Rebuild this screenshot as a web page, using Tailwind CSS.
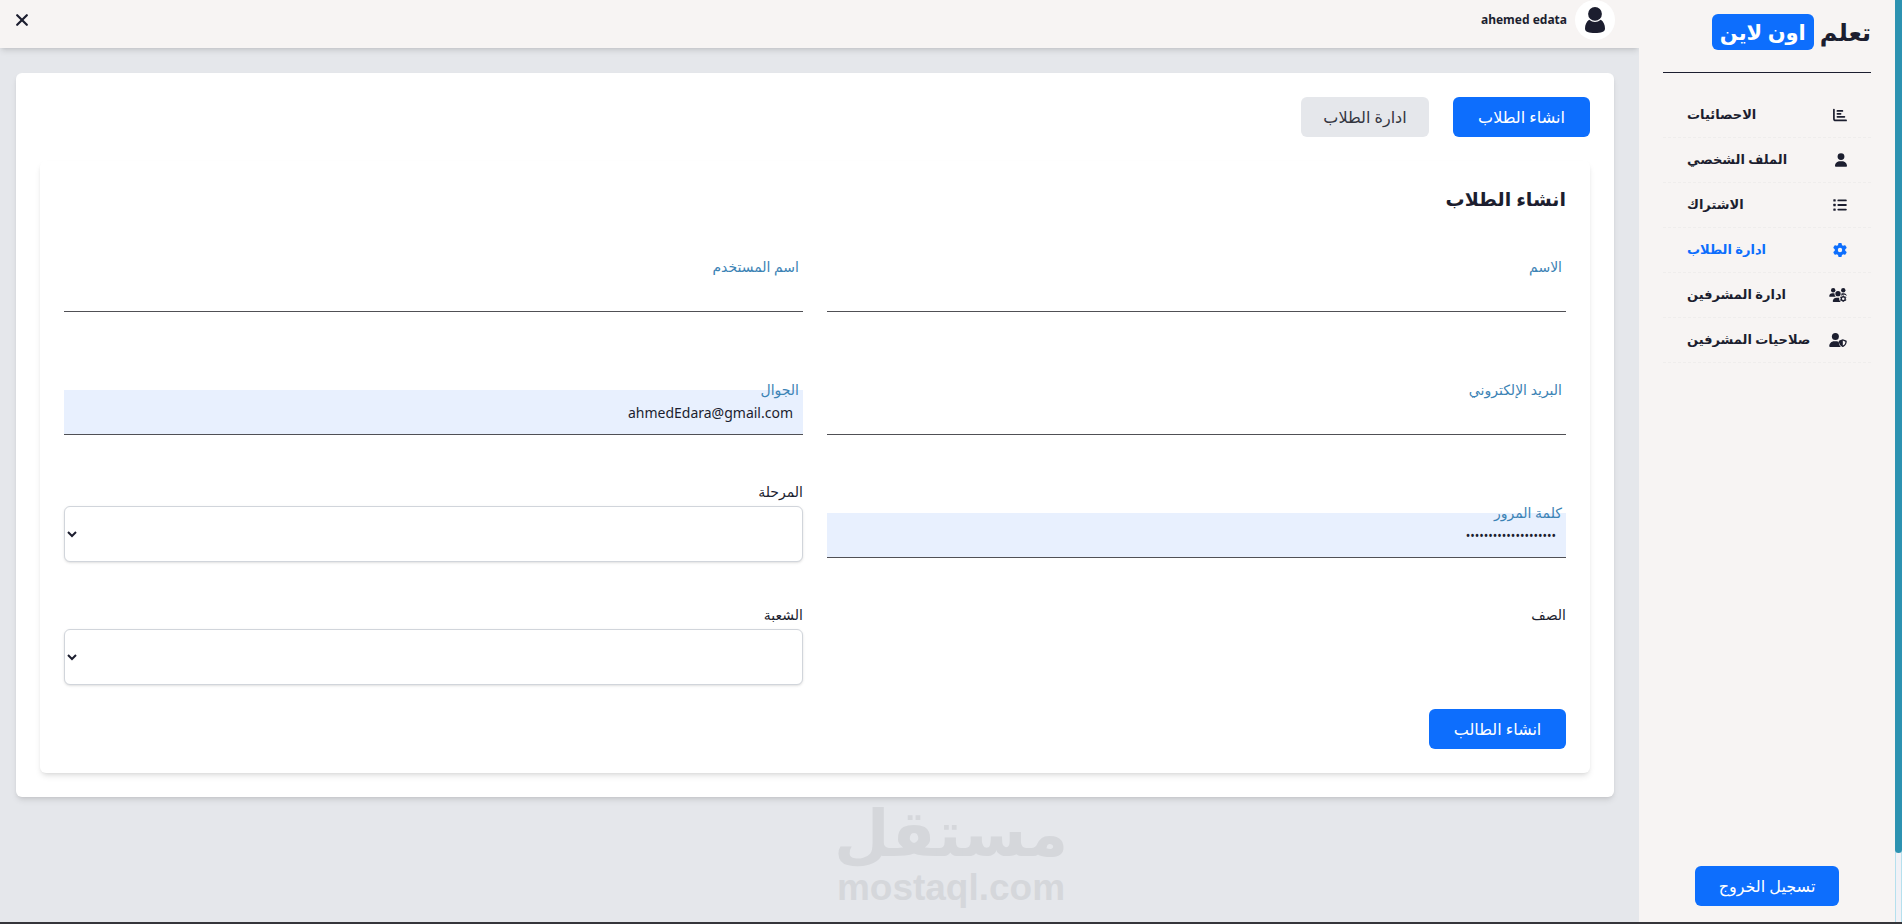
<!DOCTYPE html>
<html lang="ar" dir="rtl">
<head>
<meta charset="utf-8">
<title>ادارة الطلاب</title>
<script src="https://cdn.jsdelivr.net/npm/@tailwindcss/browser@4"></script>
</head>
<body class="flex h-screen flex-col overflow-hidden bg-[#e5e7eb] font-['Noto_Sans','DejaVu_Sans',sans-serif] text-[#1c1e2f]">
<div class="flex min-h-0 grow">
  <div class="flex w-[7px] shrink-0 flex-col border-x border-[#b5e0ee] bg-[#f1f1f6]" aria-hidden="true">
    <div class="-mx-px h-[92.5%] rounded-b bg-[#2c92b1]"></div>
  </div>

  <aside class="relative z-10 flex w-64 shrink-0 flex-col bg-[#f7f4f3] px-6 pb-4 pt-3.5">
    <h1 class="flex h-9 items-center gap-1.5 text-2xl font-bold">
      <span>تعلم</span>
      <span class="flex h-9 items-center whitespace-nowrap rounded-md bg-[#0d6efd] px-2 text-[21px] text-white">اون لاين</span>
    </h1>
    <hr class="mt-[22px] border-[#1c1e2f]">
    <nav class="mt-5 text-[13px] font-bold">
      <a href="#" class="flex h-[45px] items-center justify-between border-b border-dashed border-[#efedec] px-6">
        <svg class="size-3.5" viewBox="0 0 14 14" fill="none" stroke="currentColor" stroke-width="1.7" stroke-linecap="round" stroke-linejoin="round"><path d="M.9 1.5v9.2q0 1.7 1.7 1.7h10.5M4.400 2.900h5M4.400 5.800h3.200M4.400 8.800h7"/></svg>
        <span>الاحصائيات</span></a>
      <a href="#" class="flex h-[45px] items-center justify-between border-b border-dashed border-[#efedec] px-6">
        <svg class="h-3.5 w-3" viewBox="0 0 448 512" fill="currentColor"><path d="M224 256A128 128 0 1 0 224 0a128 128 0 1 0 0 256zm-45.700 48C79.800 304 0 383.800 0 482.300C0 498.700 13.300 512 29.700 512H418.300c16.400 0 29.700-13.300 29.700-29.700C448 383.800 368.200 304 269.700 304H178.300z"/></svg>
        <span>الملف الشخصي</span></a>
      <a href="#" class="flex h-[45px] items-center justify-between border-b border-dashed border-[#efedec] px-6">
        <svg class="size-3.5" viewBox="0 0 14 14" fill="currentColor"><rect x=".3" y="1.2" width="2.4" height="2.4" rx=".5"/><rect x=".3" y="5.8" width="2.4" height="2.4" rx=".5"/><rect x=".3" y="10.4" width="2.4" height="2.4" rx=".5"/><rect x="4.4" y="1.5" width="9.4" height="1.8" rx=".9"/><rect x="4.4" y="6.1" width="9.4" height="1.8" rx=".9"/><rect x="4.4" y="10.7" width="9.4" height="1.8" rx=".9"/></svg>
        <span>الاشتراك</span></a>
      <a href="#" class="flex h-[45px] items-center justify-between border-b border-dashed border-[#efedec] px-6 text-[#0d6efd]" aria-current="page">
        <svg class="size-3.5" viewBox="0 0 512 512" fill="currentColor"><path d="M495.900 166.600c3.200 8.700 .5 18.400-6.400 24.600l-43.300 39.400c1.100 8.300 1.700 16.800 1.700 25.400s-.6 17.100-1.700 25.400l43.300 39.400c6.900 6.200 9.600 15.900 6.400 24.600c-4.400 11.900-9.700 23.300-15.800 34.300l-4.700 8.100c-6.600 11-14 21.400-22.100 31.200c-5.900 7.200-15.700 9.600-24.500 6.800l-55.700-17.700c-13.400 10.300-28.200 18.900-44 25.400l-12.500 57.100c-2 9.100-9 16.300-18.200 17.800c-13.800 2.300-28 3.500-42.500 3.500s-28.700-1.200-42.500-3.500c-9.200-1.500-16.200-8.700-18.200-17.800l-12.500-57.100c-15.800-6.500-30.600-15.100-44-25.400L83.100 425.900c-8.800 2.800-18.600 .3-24.500-6.800c-8.100-9.800-15.500-20.200-22.100-31.200l-4.700-8.100c-6.100-11-11.400-22.400-15.800-34.300c-3.200-8.700-.5-18.400 6.400-24.600l43.300-39.400C64.600 273.100 64 264.600 64 256s.6-17.100 1.700-25.400L22.400 191.200c-6.900-6.200-9.600-15.900-6.400-24.600c4.400-11.900 9.700-23.300 15.800-34.300l4.700-8.100c6.600-11 14-21.400 22.100-31.200c5.900-7.200 15.700-9.600 24.500-6.800l55.700 17.700c13.400-10.300 28.200-18.900 44-25.400l12.500-57.100c2-9.100 9-16.300 18.200-17.800C227.300 1.200 241.500 0 256 0s28.700 1.200 42.500 3.500c9.200 1.500 16.200 8.700 18.200 17.800l12.500 57.100c15.800 6.500 30.600 15.100 44 25.400l55.700-17.700c8.800-2.800 18.600-.3 24.500 6.800c8.100 9.800 15.500 20.200 22.100 31.200l4.700 8.100c6.100 11 11.400 22.400 15.800 34.300zM256 336a80 80 0 1 0 0-160 80 80 0 1 0 0 160z"/></svg>
        <span>ادارة الطلاب</span></a>
      <a href="#" class="flex h-[45px] items-center justify-between border-b border-dashed border-[#efedec] px-6">
        <svg class="h-3.5 w-[18px]" viewBox="0 0 640 512" fill="currentColor"><circle cx="144" cy="80" r="80"/><circle cx="512" cy="80" r="80"/><circle cx="320" cy="208" r="98"/><path d="M0 299c0-59 48-107 107-107h43c16 0 31 4 45 10-8 55 14 95 48 118H21c-12 0-21-9-21-21zM445 202c14-6 29-10 45-10h43c59 0 107 48 107 107-30-35-60-50-105-50-45 0-80 16-112 50 15-25 24-55 22-97zM128 485c0-74 60-133 133-133h102c-5 70 15 130 60 160H155c-15 0-27-12-27-27z"/><circle cx="512" cy="392" r="72" fill="none" stroke="currentColor" stroke-width="50"/><path d="M512 300v-28M512 484v28M432 346l-24-14M592 438l24 14M432 438l-24 14M592 346l24-14" stroke="currentColor" stroke-width="52"/></svg>
        <span>ادارة المشرفين</span></a>
      <a href="#" class="flex h-[45px] items-center justify-between border-b border-dashed border-[#efedec] px-6">
        <svg class="h-3.5 w-[18px]" viewBox="0 0 640 512" fill="currentColor"><circle cx="224" cy="128" r="128"/><path d="M178 304h92c28 0 55 7 78 18 2 80 30 150 78 190H30c-17 0-30-13-30-30 0-98 80-178 178-178z"/><path fill-rule="evenodd" d="M496 226l124 49c12 5 20 16 20 29 0 63-26 161-132 207q-12 3-24 0c-106-46-132-144-132-207 0-13 8-24 20-29zM496 277v184c68-32 92-86 94-144z"/></svg>
        <span>صلاحيات المشرفين</span></a>
    </nav>
    <button type="button" class="mx-auto mt-auto h-10 w-36 rounded-md bg-[#0d6efd] text-base text-white">تسجيل الخروج</button>
  </aside>

  <div class="flex min-w-0 grow flex-col">
    <header class="flex h-12 shrink-0 items-start justify-between bg-[#f7f4f3] pe-4 ps-6 shadow-md">
      <div class="flex items-center gap-2">
        <span class="flex size-10 items-center justify-center rounded-full bg-white">
          <svg class="h-[26px] w-5" viewBox="0 0 20 26" fill="currentColor"><circle cx="10" cy="6.900" r="6.900"/><path d="M4.200 12.800Q10 17.200 15.800 12.800C18.500 14.500 20 18 20 21.500 20 25 16 26 10 26S0 25 0 21.500C0 18 1.500 14.500 4.200 12.800z"/></svg>
        </span>
        <span class="text-xs font-bold" dir="ltr">ahemed edata</span>
      </div>
      <button type="button" aria-label="اغلاق" class="mt-3.5"><svg class="size-3" viewBox="0 0 12 12" fill="none" stroke="currentColor" stroke-width="2.2" stroke-linecap="round"><path d="M1.200 1.200l9.600 9.600M10.800 1.200L1.200 10.800"/></svg></button>
    </header>

    <main class="flex grow flex-col pe-4 ps-[25px] pt-[25px]">
      <section class="rounded-md bg-white p-6 shadow-md">
        <div class="flex gap-6 text-base">
          <button type="button" class="h-10 w-[137px] rounded-md bg-[#0d6efd] text-white">انشاء الطلاب</button>
          <button type="button" class="h-10 w-32 rounded-md bg-[#e5e7eb] text-[#33353f]">ادارة الطلاب</button>
        </div>
        <form class="mt-6 rounded-md p-6 shadow-md">
          <h2 class="mb-1 text-[19px] leading-7 font-bold">انشاء الطلاب</h2>
          <div class="grid grid-cols-2 gap-6 text-sm">
            <div class="relative h-[99px] pt-[50px]">
              <label for="name" class="absolute start-1 top-10 leading-5 text-[#3c83b5]">الاسم</label>
              <input id="name" type="text" class="h-[45px] w-full border-b border-[#505055] px-2.5 text-sm outline-none">
            </div>
            <div class="relative h-[99px] pt-[50px]">
              <label for="username" class="absolute start-1 top-10 leading-5 text-[#3c83b5]">اسم المستخدم</label>
              <input id="username" type="text" class="h-[45px] w-full border-b border-[#505055] px-2.5 text-sm outline-none">
            </div>
            <div class="relative h-[99px] pt-[50px]">
              <label for="email" class="absolute start-1 top-10 leading-5 text-[#3c83b5]">البريد الإلكتروني</label>
              <input id="email" type="email" class="h-[45px] w-full border-b border-[#505055] px-2.5 text-sm outline-none">
            </div>
            <div class="relative h-[99px] pt-[50px]">
              <label for="mobile" class="absolute start-1 top-10 leading-5 text-[#3c83b5]">الجوال</label>
              <input id="mobile" type="text" value="ahmedEdara@gmail.com" class="h-[45px] w-full border-b border-[#505055] bg-[#e8f0fe] px-2.5 text-sm outline-none">
            </div>
            <div class="relative h-[99px] pt-[50px]">
              <label for="password" class="absolute start-1 top-10 leading-5 text-[#3c83b5]">كلمة المرور</label>
              <input id="password" type="password" value="12345678901234567890" class="h-[45px] w-full border-b border-[#505055] bg-[#e8f0fe] px-2.5 text-xs outline-none">
            </div>
            <div class="flex h-[99px] flex-col justify-end">
              <label for="stage" class="mb-1 leading-5">المرحلة</label>
              <select id="stage" class="h-14 w-full rounded-md border border-[#d1d5db] bg-white shadow-sm"></select>
            </div>
            <div class="h-[99px] pt-[19px]"><span class="block leading-5">الصف</span></div>
            <div class="flex h-[99px] flex-col justify-end">
              <label for="section" class="mb-1 leading-5">الشعبة</label>
              <select id="section" class="h-14 w-full rounded-md border border-[#d1d5db] bg-white shadow-sm"></select>
            </div>
          </div>
          <button type="button" class="mt-6 h-10 w-[137px] rounded-md bg-[#0d6efd] text-base text-white">انشاء الطالب</button>
        </form>
      </section>
    </main>
  </div>
</div>
<div class="h-0.5 shrink-0 bg-[#35353a]"></div>
<div class="pointer-events-none absolute bottom-4 left-1/2 flex -translate-x-1/2 flex-col items-center text-[#d5d7db]" aria-hidden="true">
  <div class="text-[64px] leading-[72px] font-bold">مستقل</div>
  <div class="font-['Liberation_Sans',sans-serif] text-[37px] leading-10 font-bold" dir="ltr">mostaql.com</div>
</div>
</body>
</html>
